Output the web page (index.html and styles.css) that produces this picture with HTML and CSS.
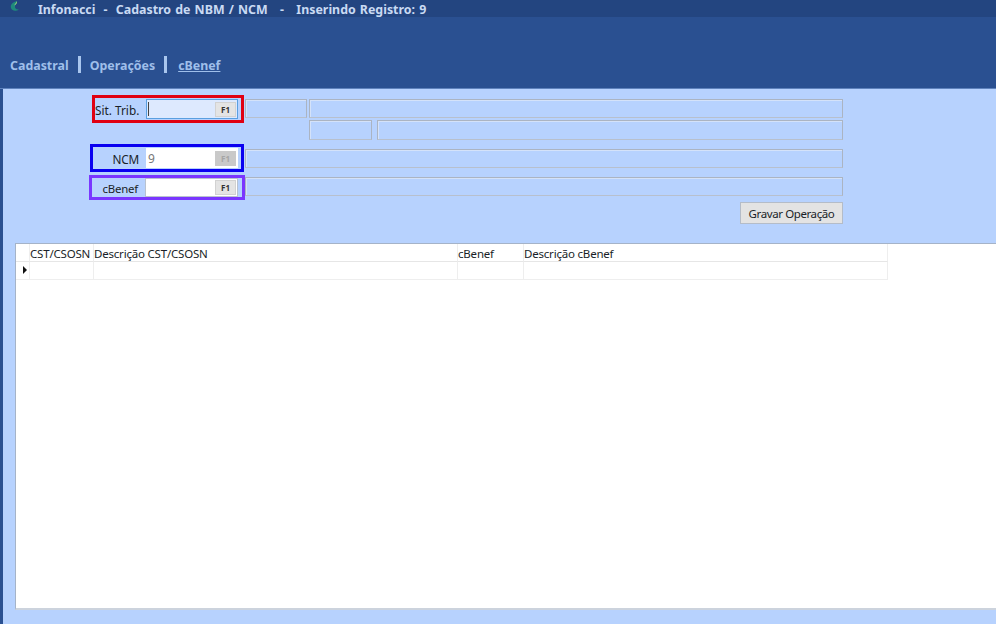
FILE: index.html
```html
<!DOCTYPE html>
<html lang="pt-BR">
<head>
    <meta charset="UTF-8">
    <meta name="viewport" content="width=device-width, initial-scale=1.0">
    <title>Cadastro de NBM / NCM</title>
    <link rel="stylesheet" href="styles.css">
</head>
<body>
    <div class="titlebar">
        <svg class="logo" width="10" height="11" viewBox="0 0 10 11">
            <path d="M7 0 C3 1 0 3.500 1 7 C2 10 6 10.500 9 8.500 C6.500 9 4.500 7.500 5 5 C5.300 3.500 7 2 7 0 Z" fill="#1f8a7c"/>
            <path d="M7 0 C6.500 1.500 5 3 4 4.500 C6 4 7.500 2 7 0 Z" fill="#a8e07a"/>
        </svg>
        <span class="title-text">Infonacci&nbsp; -&nbsp; Cadastro de NBM / NCM &nbsp; - &nbsp; Inserindo Registro: 9</span>
    </div>

    <div class="header">
        <nav class="tabs">
            <span class="tab">Cadastral</span>
            <span class="tab-sep"></span>
            <span class="tab">Operações</span>
            <span class="tab-sep"></span>
            <span class="tab tab-active">cBenef</span>
        </nav>
    </div>

    <div class="main">
        <!-- Situacao tributaria -->
        <div class="group group-sit">
            <div class="mark mark-red">
                <label class="field-label">Sit. Trib.</label>
                <div class="lookup lookup-focus">
                    <span class="caret"></span>
                    <span class="f1">F1</span>
                </div>
            </div>
            <div class="side">
                <div class="side-row">
                    <div class="box box-code"></div>
                    <div class="box box-desc"></div>
                </div>
                <div class="side-row side-row-second">
                    <div class="box box-small"></div>
                    <div class="box box-rest"></div>
                </div>
            </div>
        </div>

        <!-- NCM -->
        <div class="group group-ncm">
            <div class="mark mark-blue">
                <label class="field-label">NCM</label>
                <div class="lookup lookup-readonly">
                    <span class="lookup-value">9</span>
                    <span class="f1 f1-disabled">F1</span>
                </div>
            </div>
            <div class="box box-wide box-wide-ncm"></div>
        </div>

        <!-- cBenef -->
        <div class="group group-cbenef">
            <div class="mark mark-purple">
                <label class="field-label">cBenef</label>
                <div class="lookup">
                    <span class="f1">F1</span>
                </div>
            </div>
            <div class="box box-wide box-wide-cbenef"></div>
        </div>

        <button class="save-btn">Gravar Operação</button>

        <div class="grid-panel">
            <div class="grid-table">
                <div class="cell cell-head"></div>
                <div class="cell cell-head">CST/CSOSN</div>
                <div class="cell cell-head">Descrição CST/CSOSN</div>
                <div class="cell cell-head">cBenef</div>
                <div class="cell cell-head">Descrição cBenef</div>
                <div class="cell cell-indicator"><span class="arrow"></span></div>
                <div class="cell"></div>
                <div class="cell"></div>
                <div class="cell"></div>
                <div class="cell"></div>
            </div>
        </div>
    </div>
</body>
</html>
```

FILE: styles.css
```css
html, body {
    margin: 0;
    padding: 0;
}
body {
    width: 996px;
    height: 624px;
    overflow: hidden;
    background-color: #b7d2fe;
    font-family: "Noto Sans", "Open Sans", sans-serif;
    font-size: 11.500px;
    letter-spacing: -0.200px;
    color: #1a1f28;
}

/* Top bars */
.titlebar {
    display: flex;
    align-items: center;
    height: 17px;
    padding-left: 10px;
    background-color: #234580;
    color: #c9daf3;
}
.logo {
    margin-top: -5px;
    flex: none;
}
.title-text {
    margin: 1px 0 0 18px;
    font-size: 12.400px;
    font-weight: bold;
    letter-spacing: 0;
    word-spacing: 0.900px;
    white-space: pre;
}
.header {
    height: 72px;
    background-color: #2a5091;
    border-bottom: 1px solid #5f83bd;
    box-sizing: border-box;
}
.tabs {
    display: flex;
    align-items: center;
    padding: 39px 0 0 10px;
    height: 17px;
    font-size: 12.400px;
    font-weight: bold;
    letter-spacing: 0;
    color: #9fbfea;
}
.tab {
    padding-top: 1px;
}
.tab-sep {
    width: 3px;
    height: 17px;
    margin: 0 9px;
    background-color: #a9c6ee;
}
.tab-active {
    margin-left: 2px;
    text-decoration: underline;
}

/* Form area */
.main {
    border-left: 3px solid #2a5091;
    height: 535px;
    box-sizing: border-box;
}
.group {
    display: flex;
    align-items: flex-start;
}
.group-sit {
    padding: 6px 0 0 89px;
}
.group-ncm {
    margin-top: 4px;
    padding-left: 87px;
}
.group-cbenef {
    margin-top: 3px;
    padding-left: 86px;
}
.mark {
    display: flex;
    align-items: center;
    box-sizing: border-box;
    border: 3px solid;
    height: 28px;
    flex: none;
}
.mark-red {
    width: 152px;
    border-color: #e00012;
}
.mark-red .field-label {
    letter-spacing: 0;
}
.mark-blue {
    width: 154px;
    border-color: #0a00f0;
}
.mark-purple {
    width: 156px;
    height: 25px;
    border-color: #7a36ff;
}
.field-label {
    flex: 1;
    min-width: 0;
    text-align: right;
    padding: 1px 7px 0 0;
    font-size: 11.800px;
    white-space: nowrap;
}
.mark-purple .field-label {
    font-size: 11.400px;
}
.lookup {
    display: flex;
    align-items: center;
    justify-content: flex-end;
    box-sizing: border-box;
    width: 92px;
    height: 20px;
    padding-right: 1px;
    background-color: #fff;
    border: 1px solid #b9c2cf;
    flex: none;
}
.mark-purple .lookup {
    width: 93px;
    height: 19px;
    margin-right: 4px;
}
.mark-red .lookup,
.mark-blue .lookup {
    margin-right: 3px;
}
.lookup-focus {
    background-color: #dde9fe;
    border-color: #5a9fe0;
    position: relative;
}
.lookup-readonly {
    border-color: #fff;
}
.caret {
    position: absolute;
    left: 1px;
    top: 2px;
    width: 1px;
    height: 14px;
    background-color: #444;
}
.lookup-value {
    flex: 1;
    padding: 1px 0 0 1px;
    font-size: 12px;
    color: #777;
}
.f1 {
    display: block;
    box-sizing: border-box;
    width: 21px;
    height: 15px;
    line-height: 13px;
    text-align: center;
    font-size: 8px;
    font-weight: bold;
    letter-spacing: 0;
    color: #333;
    background-color: #e4e4e4;
    border: 1px solid #d2d2d2;
}
.f1-disabled {
    background-color: #c9c9c9;
    color: #a5a5a5;
    border-color: #c9c9c9;
}
.side {
    margin: 4px 0 0 1px;
}
.side-row {
    display: flex;
    height: 19px;
}
.side-row-second {
    height: 20px;
    margin: 2px 0 0 64px;
}
.box {
    box-sizing: border-box;
    height: 100%;
    border: 1px solid #abb4c2;
    border-bottom-color: #b8c0cd;
    box-shadow: inset 1px 1px 0 #d4e2f9;
}
.box-code { width: 62px; margin-right: 2px; }
.box-desc { width: 534px; }
.box-small { width: 63px; margin-right: 5px; }
.box-rest { width: 466px; }
.box-wide {
    width: 598px;
    height: 19px;
    flex: none;
}
.box-wide-ncm { margin: 5px 0 0 1px; }
.box-wide-cbenef { margin-top: 2px; }

.save-btn {
    display: block;
    box-sizing: border-box;
    width: 103px;
    height: 22px;
    margin: 2px 0 0 737px;
    padding: 0;
    font-family: inherit;
    font-size: 11.500px;
    letter-spacing: -0.400px;
    color: #1a1f28;
    background-color: #e3e3e3;
    border: 1px solid #b4bcc8;
}

/* Data grid */
.grid-panel {
    box-sizing: border-box;
    height: 367px;
    margin: 19px 0 0 12px;
    background-color: #fff;
    border-top: 1px solid #a5b3c8;
    border-left: 1px solid #a5b3c8;
    border-bottom: 2px solid #ccd3dd;
}
.grid-table {
    display: grid;
    grid-template-columns: 14px 64px 364px 66px 364px;
    grid-template-rows: 18px 18px;
    width: 872px;
}
.cell {
    box-sizing: border-box;
    padding: 1px 0 0 0;
    line-height: 17px;
    white-space: nowrap;
    border-right: 1px solid #eeeeee;
    border-bottom: 1px solid #eeeeee;
}
.cell-head {
    border-bottom-color: #e6e6e6;
}
.cell-indicator {
    display: flex;
    align-items: center;
    padding: 0 0 1px 7px;
}
.arrow {
    width: 0;
    height: 0;
    border-top: 4px solid transparent;
    border-bottom: 4px solid transparent;
    border-left: 4px solid #111;
}
```
